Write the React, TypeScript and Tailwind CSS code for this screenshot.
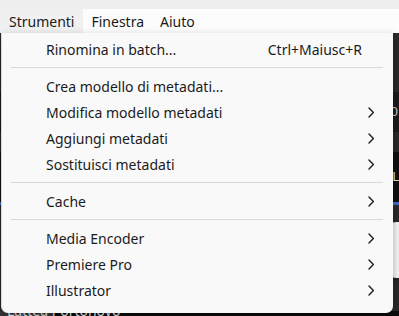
import { Fragment } from 'react';

type Item =
  | { type: 'sep' }
  | { type: 'item'; label: string; shortcut?: string; sub?: boolean };

const items: Item[] = [
  { type: 'item', label: 'Rinomina in batch...', shortcut: 'Ctrl+Maiusc+R' },
  { type: 'sep' },
  { type: 'item', label: 'Crea modello di metadati...' },
  { type: 'item', label: 'Modifica modello metadati', sub: true },
  { type: 'item', label: 'Aggiungi metadati', sub: true },
  { type: 'item', label: 'Sostituisci metadati', sub: true },
  { type: 'sep' },
  { type: 'item', label: 'Cache', sub: true },
  { type: 'sep' },
  { type: 'item', label: 'Media Encoder', sub: true },
  { type: 'item', label: 'Premiere Pro', sub: true },
  { type: 'item', label: 'Illustrator', sub: true },
];

const Chevron = () => (
  <svg width="8" height="11" viewBox="0 0 8 11" fill="none" className="shrink-0">
    <path d="M2 1 L6.4 5.5 L2 10" stroke="#1f1f1f" strokeWidth="1.4" strokeLinecap="round" strokeLinejoin="round" />
  </svg>
);

export default function App() {
  return (
    <div
      className="relative w-[399px] h-[316px] overflow-hidden bg-[#1f1f1f] text-[14px] text-[#1b1b1b]"
      style={{ fontFamily: '"Noto Sans", "Open Sans", sans-serif' }}
    >
      {/* window title strip + menubar */}
      <div className="h-[9px] bg-[#eeeeee]" />
      <div className="flex h-[24px] items-center bg-[#fcfcfc]">
        <div className="flex h-full items-center bg-[#f0f0f0] pl-[9px] pr-[9px]">Strumenti</div>
        <div className="flex h-full items-center px-[8px]">Finestra</div>
        <div className="flex h-full items-center px-[8px]">Aiuto</div>
      </div>

      {/* app content behind the menu */}
      <div className="flex h-[283px] flex-col bg-[#202020]">
        <div className="h-[59px] bg-[#2a2a2a]" />
        <div className="flex h-[40px] items-center justify-end bg-[#1c1c1c] pr-[1px] text-[13px] text-[#d0d0d0]">0</div>
        <div className="h-[20px] bg-[#2a2a2a]" />
        <div className="flex h-[50px] items-center justify-end bg-[#111111] text-[13px] text-[#eeeeee]">L</div>
        <div className="h-[3px] bg-[#3d6fd1]" />
        <div className="flex-1 bg-[#2b2b2b]" />
        <div className="flex h-[5px] items-end bg-[#262626]">
          <div className="h-full w-[22px] bg-[#3a3a3a]" />
          <div className="h-full w-[1px] bg-[#3d6fd1]" />
          <div className="h-full w-[20px] bg-[#3a3a3a]" />
          <div className="h-full w-[1px] bg-[#3d6fd1]" />
          <div className="h-full w-[9px] bg-[#3a3a3a]" />
          <div className="h-full flex-1 bg-[#0c0c0c]" />
        </div>
      </div>
      <div className="absolute left-[7px] top-[302px] text-[14px] leading-[18px] text-white">Lattea Portonovo</div>

      {/* peeking submenu */}
      <div className="absolute left-[389px] top-[222px] h-[56px] w-[40px] rounded-[7px] bg-[#f9f9f9] shadow-[0_2px_6px_rgba(0,0,0,0.3)]" />

      {/* dropdown */}
      <div className="absolute left-[1px] top-[33px] w-[392px] rounded-b-[7px] border-l border-[#d8d8d8] bg-[#f9f9f9] pb-[10px] pt-[3px] shadow-[0_4px_10px_rgba(0,0,0,0.35)]">
        {items.map((it, i) => (
          <Fragment key={i}>
            {it.type === 'sep' ? (
              <div className="py-[5px] pl-[9px] pr-[10px]">
                <div className="h-[1px] bg-[#dadada]" />
              </div>
            ) : (
              <div className="flex h-[26px] items-center pl-[44px] pr-[18px]">
                <span className="flex-1">{it.label}</span>
                {it.shortcut && <span className="pr-[13px]">{it.shortcut}</span>}
                {it.sub && <Chevron />}
              </div>
            )}
          </Fragment>
        ))}
      </div>
    </div>
  );
}
